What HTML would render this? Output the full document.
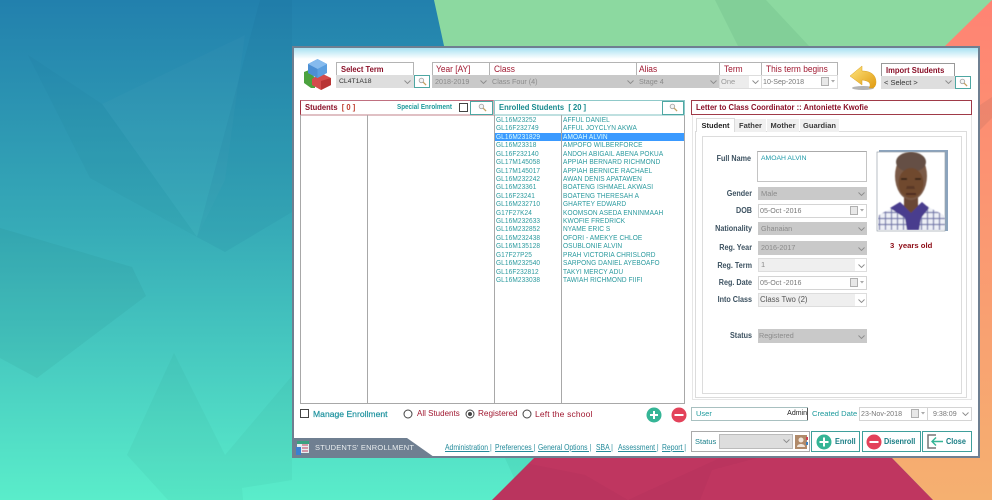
<!DOCTYPE html>
<html><head><meta charset="utf-8"><style>
html,body{margin:0;padding:0;width:992px;height:500px;overflow:hidden;background:#2a8aae}
body{position:relative;font-family:"Liberation Sans",sans-serif;font-size:8px;}
div,span.t{position:absolute;white-space:nowrap;box-sizing:border-box}
.bg{position:absolute;left:0;top:0}
.r{color:#a01830;font-size:9px;line-height:12px;transform:scaleX(.93);transform-origin:0 0}
.rb{color:#8a1028;font-weight:bold;font-size:8.5px;line-height:12px;transform:scaleX(.895);transform-origin:0 0}
.b{border:1px solid #b4b4b4}
.cg{background:#c9c9c9;color:#8b8b8b;font-size:7.2px;line-height:13px;padding-left:3px}
.cw{background:#fff;border:1px solid #d4d4d4;color:#777;font-size:7.1px;line-height:12px;padding-left:1px}
.lab{color:#3c5160;font-weight:bold;font-size:8px;text-align:right;width:70px;left:682px;line-height:12px;transform:scaleX(.9);transform-origin:100% 0}
.teal{color:#1d9a9c}
.sb{background:#fff;border:1px solid #4ea7a3}
.lnk{color:#238a9a;font-size:8px;text-decoration:underline;top:442px;line-height:11px;transform:scaleX(.85);transform-origin:0 0}
.lst{line-height:8.42px;font-size:7.6px;color:#2a9a9e;letter-spacing:.1px;transform:scaleX(.86);transform-origin:0 0}
.btn{background:#fff;border:1px solid #3f9f9b;top:431px;height:21px}
.bt{color:#177c83;font-weight:bold;font-size:8.5px;line-height:19px;transform:scaleX(.86);transform-origin:0 0}
.tab{background:#f0f0f0;color:#3b3b3b;font-weight:bold;font-size:7.5px;line-height:13px;text-align:center;top:119px;height:13px}
svg{position:absolute;overflow:visible}
</style></head><body>
<svg class="bg" width="992" height="500" viewBox="0 0 992 500">
<defs>
<linearGradient id="g1" x1="0" y1="0" x2="0" y2="1"><stop offset="0" stop-color="#2280ad"/><stop offset=".45" stop-color="#36aab7"/><stop offset="1" stop-color="#5aedca"/></linearGradient>
<linearGradient id="g2" x1="0" y1="0" x2="0" y2="1"><stop offset="0" stop-color="#ff8373"/><stop offset="1" stop-color="#f5b070"/></linearGradient>
<symbol id="ch" viewBox="0 0 7 4"><path d="M.5.5L3.5 3.5 6.5.5" fill="none" stroke="#8c8c8c" stroke-width=".9"/></symbol>
<symbol id="mg" viewBox="0 0 10 10"><circle cx="3.8" cy="3.8" r="2.5" fill="#f4f4f4" stroke="#a8a8a8" stroke-width="1"/><path d="M5.6 5.6L9 9" stroke="#c4a060" stroke-width="1.4"/></symbol>
<symbol id="cal" viewBox="0 0 14 9"><rect x=".5" y=".5" width="7" height="8" fill="#e8e8e8" stroke="#b0b0b0"/><path d="M10 3h4l-2 2.5z" fill="#aaa"/></symbol>
</defs>
<rect width="992" height="500" fill="url(#g1)"/>
<path d="M28 55L102 104 197 237 90 178Z" fill="#155a7a" opacity=".05"/>
<path d="M102 104L245 35 225 180 197 237Z" fill="#fff" opacity=".02"/>
<path d="M260 0L197 237 225 252 292 212V0Z" fill="#155a7a" opacity=".07"/>
<path d="M0 228L132 267 146 296 37 378 0 358Z" fill="#1a6a6a" opacity=".08"/>
<path d="M174 353L127 455 168 500H243L242 488 292 480V376L225 455Z" fill="#1a7a6a" opacity=".06"/>
<path d="M434 0H992L892 458H534Z" fill="#8cd9a0"/>
<path d="M715 0H766L809 46H738Z" fill="#5aa878" opacity=".2"/>
<path d="M992 0V500H933L892 458 945 46Z" fill="url(#g2)"/>
<path d="M980 105L992 97V118L980 130Z" fill="#b06a58" opacity=".2"/>
<path d="M534 458H892L933 500H492Z" fill="#bf3660"/>
<path d="M530 464L585 475 628 500H492Z" fill="#7a2050" opacity=".08"/>
<path d="M700 500L712 470 757 458H720L628 500Z" fill="#7a2050" opacity=".08"/>
<path d="M505 458H534L515 480Z" fill="#1a7a6a" opacity=".08"/>
</svg>

<!-- window -->
<div style="left:292px;top:46px;width:688px;height:412px;background:#fff;border:2px solid #6f7f91"></div>
<div style="left:294px;top:48px;width:684px;height:11px;background:linear-gradient(#a9e2f2,#fff)"></div>

<!-- cube -->
<svg style="left:303px;top:59px" width="29" height="32" viewBox="0 0 29 32">
<path d="M1 13L6 11 12 19V29H8L1 24Z" fill="#4ca23e"/>
<path d="M9 20L18 14 28 19V26L18 31 9 26Z" fill="#d44c4c"/>
<path d="M18 22L28 19V26L18 31Z" fill="#b93535"/>
<path d="M14.500 0L24 5V14L14.500 19 5 14V5Z" fill="#5b9fe0"/>
<path d="M14.500 0L24 5 14.500 10 5 5Z" fill="#86bbee"/>
<path d="M14.500 10V19L5 14V5Z" fill="#4c8fd4"/>
</svg>

<!-- top controls -->
<div class="b" style="left:336px;top:62px;width:78px;height:14px"></div>
<div class="rb" style="left:341px;top:63px">Select Term</div>
<div style="left:336px;top:75px;width:78px;height:13px;background:#dedede;color:#333;font-size:6.8px;line-height:13px;padding-left:3px">CL4T1A18</div>
<svg style="left:404px;top:80px" width="7" height="4"><use href="#ch" width="7" height="4"/></svg>
<div class="sb" style="left:414px;top:75px;width:16px;height:13px"></div>
<svg style="left:418px;top:77px" width="9" height="9"><use href="#mg" width="9" height="9"/></svg>

<div class="b" style="left:432px;top:62px;width:58px;height:14px"></div>
<div class="r" style="left:436px;top:63px">Year [AY]</div>
<div class="b" style="left:489px;top:62px;width:148px;height:14px"></div>
<div class="r" style="left:494px;top:63px">Class</div>
<div class="b" style="left:636px;top:62px;width:84px;height:14px"></div>
<div class="r" style="left:639px;top:63px">Alias</div>
<div class="b" style="left:719px;top:62px;width:43px;height:14px"></div>
<div class="r" style="left:724px;top:63px">Term</div>
<div class="b" style="left:761px;top:62px;width:77px;height:14px"></div>
<div class="r" style="left:766px;top:63px">This term begins</div>
<div class="cg" style="left:432px;top:75px;width:58px;height:13px">2018-2019</div>
<div class="cg" style="left:489px;top:75px;width:148px;height:13px">Class Four (4)</div>
<div class="cg" style="left:636px;top:75px;width:83px;height:13px">Stage 4</div>
<svg style="left:480px;top:80px" width="7" height="4"><use href="#ch" width="7" height="4"/></svg>
<svg style="left:627px;top:80px" width="7" height="4"><use href="#ch" width="7" height="4"/></svg>
<svg style="left:710px;top:80px" width="7" height="4"><use href="#ch" width="7" height="4"/></svg>
<div style="left:719px;top:75px;width:43px;height:14px;border:1px solid #ddd;background:#fff"></div>
<div style="left:720px;top:76px;width:29px;height:12px;background:#ececec;color:#999;font-size:7.5px;line-height:12px;padding-left:1px">One</div>
<svg style="left:752px;top:80px" width="7" height="4"><use href="#ch" width="7" height="4"/></svg>
<div class="cw" style="left:761px;top:75px;width:77px;height:14px;border-color:#ddd">10-Sep-2018</div>
<svg style="left:821px;top:77px" width="14" height="9"><use href="#cal" width="14" height="9"/></svg>

<!-- arrow -->
<svg style="left:850px;top:65px" width="27" height="26" viewBox="0 0 27 26">
<defs><linearGradient id="ar" x1="0" y1="0" x2="1" y2="1"><stop offset="0" stop-color="#ffe680"/><stop offset="1" stop-color="#e09a10"/></linearGradient></defs>
<ellipse cx="13" cy="23" rx="11" ry="2" fill="#777" opacity=".55"/>
<path d="M0 11L12 1V6C22 6 26 11 26 17 26 20 25 22 23 23H19C21 20 21 16 12 15V20Z" fill="url(#ar)" stroke="#d9a020" stroke-width=".5"/>
</svg>

<div class="b" style="left:881px;top:63px;width:74px;height:14px;border-color:#999"></div>
<div class="rb" style="left:886px;top:64px">Import Students</div>
<div style="left:881px;top:76px;width:74px;height:13px;background:#dedede;color:#333;font-size:7.5px;line-height:13px;padding-left:3px">&lt; Select &gt;</div>
<svg style="left:945px;top:80px" width="7" height="4"><use href="#ch" width="7" height="4"/></svg>
<div class="sb" style="left:955px;top:76px;width:16px;height:13px"></div>
<svg style="left:959px;top:78px" width="9" height="9"><use href="#mg" width="9" height="9"/></svg>

<!-- list headers -->
<div style="left:300px;top:100px;width:194px;height:16px;border:1px solid #d8b4b8;border-left:1px solid #a03040;border-top-color:#c07080;border-bottom:2px solid #e0c0c4"></div>
<div class="rb" style="left:305px;top:101px">Students&nbsp; <span style="color:#c04030">[ 0 ]</span></div>
<div class="teal" style="left:397px;top:102px;font-weight:bold;font-size:7.5px;line-height:10px;transform:scaleX(.84);transform-origin:0 0">Special Enrolment</div>
<div style="left:459px;top:103px;width:9px;height:9px;border:1px solid #444;background:#fff"></div>
<div class="sb" style="left:470px;top:101px;width:23px;height:14px"></div>
<svg style="left:478px;top:103px" width="9" height="9"><use href="#mg" width="9" height="9"/></svg>
<div style="left:494px;top:100px;width:191px;height:16px;border:1px solid #8fc9c9;border-bottom:2px solid #bfe0e0"></div>
<div class="rb" style="left:499px;top:101px;color:#178a8e">Enrolled Students&nbsp; [ 20 ]</div>
<div class="sb" style="left:662px;top:101px;width:22px;height:14px"></div>
<svg style="left:669px;top:103px" width="9" height="9"><use href="#mg" width="9" height="9"/></svg>

<!-- list -->
<div style="left:300px;top:115px;width:385px;height:289px;border:1px solid #a8a8a8;border-top:none"></div>
<div style="left:367px;top:115px;width:1px;height:288px;background:#a8a8a8"></div>
<div style="left:494px;top:115px;width:1px;height:288px;background:#a8a8a8"></div>
<div style="left:561px;top:115px;width:1px;height:288px;background:#a8a8a8"></div>
<div style="left:495px;top:133px;width:66px;height:8px;background:#3a9aff"></div>
<div style="left:562px;top:133px;width:122px;height:8px;background:#3a9aff"></div>
<div class="lst" style="left:496px;top:116px">GL16M23252<br>GL16F232749<br><span style="color:#dff">GL16M231829</span><br>GL16M23318<br>GL16F232140<br>GL17M145058<br>GL17M145017<br>GL16M232242<br>GL16M23361<br>GL16F23241<br>GL16M232710<br>G17F27K24<br>GL16M232633<br>GL16M232852<br>GL16M232438<br>GL16M135128<br>G17F27P25<br>GL16M232540<br>GL16F232812<br>GL16M233038</div>
<div class="lst" style="left:563px;top:116px">AFFUL DANIEL<br>AFFUL JOYCLYN AKWA<br><span style="color:#dff">AMOAH ALVIN</span><br>AMPOFO WILBERFORCE<br>ANDOH ABIGAIL ABENA POKUA<br>APPIAH BERNARD RICHMOND<br>APPIAH BERNICE RACHAEL<br>AWAN DENIS APATAWEN<br>BOATENG ISHMAEL AKWASI<br>BOATENG THERESAH A<br>GHARTEY EDWARD<br>KOOMSON ASEDA ENNINMAAH<br>KWOFIE FREDRICK<br>NYAME ERIC S<br>OFORI - AMEKYE CHLOE<br>OSUBLONIE ALVIN<br>PRAH VICTORIA CHRISLORD<br>SARPONG DANIEL AYEBOAFO<br>TAKYI MERCY ADU<br>TAWIAH RICHMOND FIIFI</div>

<!-- right panel -->
<div style="left:691px;top:100px;width:281px;height:15px;border:1px solid #a03a48"></div>
<div class="rb" style="left:696px;top:101px">Letter to Class Coordinator :: Antoniette Kwofie</div>
<div style="left:692px;top:115px;width:280px;height:285px;border:1px solid #e6e6e6;border-top:none"></div>
<div style="left:695px;top:131px;width:272px;height:267px;border:1px solid #dcdcdc"></div>
<div style="left:702px;top:136px;width:260px;height:258px;border:1px solid #dcdcdc"></div>
<div style="left:696px;top:118px;width:39px;height:14px;background:#fff;border:1px solid #dcdcdc;border-bottom:none;color:#222;font-weight:bold;font-size:7.5px;line-height:13px;text-align:center">Student</div>
<div class="tab" style="left:735px;width:31px">Father</div>
<div class="tab" style="left:767px;width:32px">Mother</div>
<div class="tab" style="left:800px;width:39px">Guardian</div>

<div class="lab" style="top:153px;left:681px">Full Name</div>
<div style="left:757px;top:151px;width:110px;height:31px;border:1px solid #c4c4c4;border-top-color:#aaa;color:#1d9aa8;font-size:6.8px;line-height:12px;padding:1px 0 0 3px">AMOAH ALVIN</div>
<div class="lab" style="top:188px">Gender</div>
<div class="cg" style="left:758px;top:187px;width:109px;height:13px;font-size:7.5px">Male</div>
<svg style="left:858px;top:192px" width="7" height="4"><use href="#ch" width="7" height="4"/></svg>
<div class="lab" style="top:205px">DOB</div>
<div class="cw" style="left:758px;top:204px;width:109px;height:14px">05-Oct -2016</div>
<svg style="left:850px;top:206px" width="14" height="9"><use href="#cal" width="14" height="9"/></svg>
<div class="lab" style="top:223px">Nationality</div>
<div class="cg" style="left:758px;top:222px;width:109px;height:13px">Ghanaian</div>
<svg style="left:858px;top:227px" width="7" height="4"><use href="#ch" width="7" height="4"/></svg>
<div class="lab" style="top:242px">Reg. Year</div>
<div class="cg" style="left:758px;top:241px;width:109px;height:14px">2016-2017</div>
<svg style="left:858px;top:247px" width="7" height="4"><use href="#ch" width="7" height="4"/></svg>
<div class="lab" style="top:260px">Reg. Term</div>
<div style="left:758px;top:258px;width:109px;height:14px;border:1px solid #ddd;background:#fff"></div>
<div style="left:759px;top:259px;width:96px;height:12px;background:#efefef;color:#888;font-size:7.5px;line-height:12px;padding-left:2px">1</div>
<svg style="left:858px;top:264px" width="7" height="4"><use href="#ch" width="7" height="4"/></svg>
<div class="lab" style="top:277px">Reg. Date</div>
<div class="cw" style="left:758px;top:276px;width:109px;height:14px">05-Oct -2016</div>
<svg style="left:850px;top:278px" width="14" height="9"><use href="#cal" width="14" height="9"/></svg>
<div class="lab" style="top:294px">Into Class</div>
<div style="left:758px;top:293px;width:109px;height:14px;border:1px solid #ddd;background:#fff"></div>
<div style="left:759px;top:294px;width:96px;height:12px;background:#efefef;color:#555;font-size:7.8px;line-height:12px;padding-left:1px">Class Two (2)</div>
<svg style="left:858px;top:299px" width="7" height="4"><use href="#ch" width="7" height="4"/></svg>
<div class="lab" style="top:330px">Status</div>
<div class="cg" style="left:758px;top:329px;width:109px;height:14px;padding-left:1px">Registered</div>
<svg style="left:858px;top:335px" width="7" height="4"><use href="#ch" width="7" height="4"/></svg>

<!-- photo -->
<svg style="left:877px;top:150px" width="71" height="82" viewBox="0 0 71 82">
<defs><clipPath id="pc"><rect x="1" y="2" width="67" height="78"/></clipPath>
<filter id="bl"><feGaussianBlur stdDeviation=".6"/></filter>
<pattern id="pl" width="6" height="6" patternUnits="userSpaceOnUse"><rect width="6" height="6" fill="#eef0f6"/><path d="M2.500 0V6M0 2.500H6" stroke="#7378ab" stroke-width="1.200"/></pattern></defs>
<rect x="2" y="0" width="69" height="81" fill="#8ba3bd"/>
<rect x="0" y="2" width="68" height="79" fill="#fff" stroke="#9aa4ac" stroke-width=".7"/>
<g clip-path="url(#pc)"><g filter="url(#bl)">
<path d="M1 80V66C6 62 12 60 20 56H50C56 60 62 62 68 66V80Z" fill="url(#pl)"/>
<path d="M13 58L23 52 34 62 45 52 52 58 44 68 42 80H30L28 68Z" fill="#4a3c8e"/>
<path d="M27 42H41V56L34 63 27 56Z" fill="#6a4736"/>
<ellipse cx="34" cy="26" rx="16" ry="24" fill="#7a5a46"/>
<ellipse cx="34" cy="12" rx="15" ry="10" fill="#655045"/>
<ellipse cx="34" cy="33" rx="12.500" ry="15" fill="#70492f"/>
<path d="M24 29h6M38 29h6" stroke="#2c1c14" stroke-width="1.400"/>
<path d="M30 36l-1 3h9l-1-3" fill="#5a3826"/>
<path d="M29 44h10" stroke="#3f241a" stroke-width="1.400"/>
</g></g></svg>
<div style="left:890px;top:241px;color:#8c0a14;font-weight:bold;font-size:7.7px;line-height:10px">3&nbsp; years old</div>

<!-- bottom options -->
<div style="left:300px;top:409px;width:9px;height:9px;border:1px solid #444;background:#fff"></div>
<div style="left:313px;top:408px;color:#1d929e;font-size:8.6px;line-height:12px;-webkit-text-stroke:.2px #1d929e">Manage Enrollment</div>
<svg style="left:403px;top:409px" width="200" height="10"><circle cx="5" cy="5" r="4" fill="#fff" stroke="#444"/><circle cx="67" cy="5" r="4" fill="#fff" stroke="#444"/><circle cx="67" cy="5" r="2" fill="#444"/><circle cx="124" cy="5" r="4" fill="#fff" stroke="#444"/></svg>
<div style="left:417px;top:408px;color:#a01830;line-height:12px;font-size:8px">All Students</div>
<div style="left:478px;top:408px;color:#a01830;line-height:12px;font-size:8.2px">Registered</div>
<div style="left:535px;top:408px;color:#a01830;line-height:12px;font-size:8.5px;letter-spacing:.15px">Left the school</div>
<svg style="left:646px;top:407px" width="42" height="16"><circle cx="8" cy="8" r="7.500" fill="#35b596"/><path d="M8 4V12M4 8H12" stroke="#fff" stroke-width="2"/><circle cx="33" cy="8" r="7.500" fill="#e3425a"/><path d="M28.500 8H37.500" stroke="#fff" stroke-width="2"/></svg>

<!-- footer tag -->
<svg style="left:294px;top:437px" width="142" height="20"><path d="M0 1H113L140 20H0Z" fill="#6f7f91"/>
<rect x="3" y="4" width="12" height="12" fill="#e6eef0"/><rect x="3" y="4" width="12" height="3" fill="#3aa080"/><path d="M8 8h6M8 11h6M8 14h6" stroke="#c04060"/><path d="M2 10h5v8H2z" fill="#3a7fd0"/></svg>
<div style="left:315px;top:442px;color:#e8ecee;font-size:7.5px;line-height:11px;letter-spacing:.2px">STUDENTS' ENROLLMENT</div>
<div class="lnk" style="left:445px">Administration |</div>
<div class="lnk" style="left:495px">Preferences |</div>
<div class="lnk" style="left:538px">General Options |</div>
<div class="lnk" style="left:596px">SBA |</div>
<div class="lnk" style="left:618px">Assessment |</div>
<div class="lnk" style="left:662px">Report |</div>

<!-- user row -->
<div style="left:691px;top:407px;width:117px;height:14px;border:1px solid #a8c0c0"></div>
<div class="teal" style="left:696px;top:408px;font-size:7.5px;line-height:12px">User</div>
<div style="right:185px;top:408px;font-size:7px;line-height:12px;color:#222">Admin</div>
<div style="left:807px;top:408px;width:1px;height:12px;background:#555"></div>
<div class="teal" style="left:812px;top:408px;font-size:7.6px;line-height:12px">Created Date</div>
<div class="cw" style="left:859px;top:407px;width:69px;height:14px">23-Nov-2018</div>
<svg style="left:911px;top:409px" width="14" height="9"><use href="#cal" width="14" height="9"/></svg>
<div class="cw" style="left:927px;top:407px;width:45px;height:14px;padding-left:5px">9:38:09</div>
<svg style="left:962px;top:412px" width="7" height="4"><use href="#ch" width="7" height="4"/></svg>

<!-- status row -->
<div style="left:691px;top:431px;width:119px;height:21px;border:1px solid #aaa"></div>
<div class="teal" style="left:695px;top:436px;font-size:7.5px;line-height:11px;color:#197f8a">Status</div>
<div style="left:719px;top:434px;width:74px;height:15px;background:#ddd;border:1px solid #bbb"></div>
<svg style="left:783px;top:439px" width="7" height="4"><use href="#ch" width="7" height="4"/></svg>
<svg style="left:795px;top:435px" width="13" height="14"><rect width="12" height="14" fill="#b08a6a"/><circle cx="6" cy="5" r="2.500" fill="#f0e6dc"/><path d="M2 12C2 8 10 8 10 12Z" fill="#f0e6dc"/><rect x="11" y="2" width="2" height="3" fill="#d04050"/><rect x="11" y="7" width="2" height="3" fill="#3a80c0"/></svg>

<div class="btn" style="left:811px;width:49px"></div>
<svg style="left:816px;top:434px" width="16" height="16"><circle cx="8" cy="8" r="7.500" fill="#35b596"/><path d="M8 3.500V12.500M3.500 8H12.500" stroke="#fff" stroke-width="2"/></svg>
<div class="bt" style="left:835px;top:432px">Enroll</div>
<div class="btn" style="left:862px;width:59px"></div>
<svg style="left:866px;top:434px" width="16" height="16"><circle cx="8" cy="8" r="7.500" fill="#e3425a"/><path d="M3.500 8H12.500" stroke="#fff" stroke-width="2"/></svg>
<div class="bt" style="left:884px;top:432px">Disenroll</div>
<div class="btn" style="left:922px;width:50px"></div>
<svg style="left:927px;top:434px" width="18" height="15"><path d="M9 1H1V14H9" fill="none" stroke="#777" stroke-width="1.500"/><path d="M16 7.500H5M9 3.500L5 7.500 9 11.500" fill="none" stroke="#35b596" stroke-width="1.400"/></svg>
<div class="bt" style="left:946px;top:432px">Close</div>
</body></html>
